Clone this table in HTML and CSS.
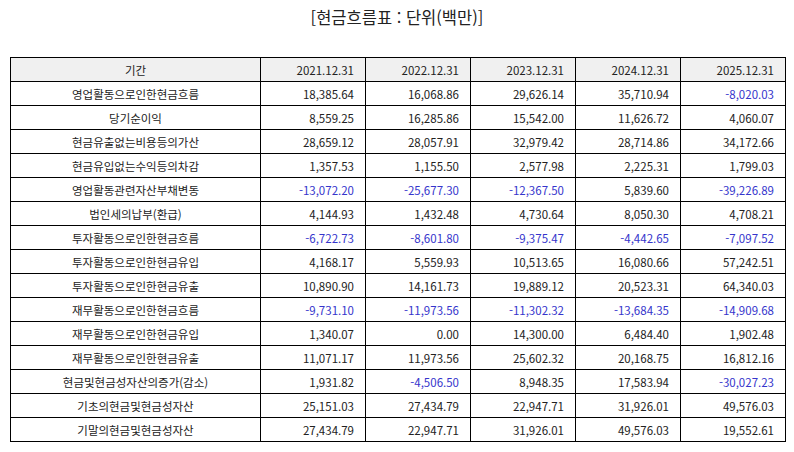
FILE: index.html
```html
<!DOCTYPE html>
<html lang="ko">
<head>
<meta charset="utf-8">
<link rel="stylesheet" href="styles.css">
</head>
<body>
<div class="page">
  <h1 class="title">[현금흐름표 : 단위(백만)]</h1>
  <table class="cf">
    <colgroup>
      <col class="c-label"><col class="c-num"><col class="c-num"><col class="c-num"><col class="c-num"><col class="c-num">
    </colgroup>
    <thead>
      <tr><th class="lbl">기간</th><th>2021.12.31</th><th>2022.12.31</th><th>2023.12.31</th><th>2024.12.31</th><th>2025.12.31</th></tr>
    </thead>
    <tbody>
      <tr><td class="lbl">영업활동으로인한현금흐름</td><td>18,385.64</td><td>16,068.86</td><td>29,626.14</td><td>35,710.94</td><td class="neg">-8,020.03</td></tr>
      <tr><td class="lbl">당기순이익</td><td>8,559.25</td><td>16,285.86</td><td>15,542.00</td><td>11,626.72</td><td>4,060.07</td></tr>
      <tr><td class="lbl">현금유출없는비용등의가산</td><td>28,659.12</td><td>28,057.91</td><td>32,979.42</td><td>28,714.86</td><td>34,172.66</td></tr>
      <tr><td class="lbl">현금유입없는수익등의차감</td><td>1,357.53</td><td>1,155.50</td><td>2,577.98</td><td>2,225.31</td><td>1,799.03</td></tr>
      <tr><td class="lbl">영업활동관련자산부채변동</td><td class="neg">-13,072.20</td><td class="neg">-25,677.30</td><td class="neg">-12,367.50</td><td>5,839.60</td><td class="neg">-39,226.89</td></tr>
      <tr><td class="lbl">법인세의납부(환급)</td><td>4,144.93</td><td>1,432.48</td><td>4,730.64</td><td>8,050.30</td><td>4,708.21</td></tr>
      <tr><td class="lbl">투자활동으로인한현금흐름</td><td class="neg">-6,722.73</td><td class="neg">-8,601.80</td><td class="neg">-9,375.47</td><td class="neg">-4,442.65</td><td class="neg">-7,097.52</td></tr>
      <tr><td class="lbl">투자활동으로인한현금유입</td><td>4,168.17</td><td>5,559.93</td><td>10,513.65</td><td>16,080.66</td><td>57,242.51</td></tr>
      <tr><td class="lbl">투자활동으로인한현금유출</td><td>10,890.90</td><td>14,161.73</td><td>19,889.12</td><td>20,523.31</td><td>64,340.03</td></tr>
      <tr><td class="lbl">재무활동으로인한현금흐름</td><td class="neg">-9,731.10</td><td class="neg">-11,973.56</td><td class="neg">-11,302.32</td><td class="neg">-13,684.35</td><td class="neg">-14,909.68</td></tr>
      <tr><td class="lbl">재무활동으로인한현금유입</td><td>1,340.07</td><td>0.00</td><td>14,300.00</td><td>6,484.40</td><td>1,902.48</td></tr>
      <tr><td class="lbl">재무활동으로인한현금유출</td><td>11,071.17</td><td>11,973.56</td><td>25,602.32</td><td>20,168.75</td><td>16,812.16</td></tr>
      <tr><td class="lbl">현금및현금성자산의증가(감소)</td><td>1,931.82</td><td class="neg">-4,506.50</td><td>8,948.35</td><td>17,583.94</td><td class="neg">-30,027.23</td></tr>
      <tr><td class="lbl">기초의현금및현금성자산</td><td>25,151.03</td><td>27,434.79</td><td>22,947.71</td><td>31,926.01</td><td>49,576.03</td></tr>
      <tr><td class="lbl">기말의현금및현금성자산</td><td>27,434.79</td><td>22,947.71</td><td>31,926.01</td><td>49,576.03</td><td>19,552.61</td></tr>
    </tbody>
  </table>
</div>
</body>
</html>
```

FILE: styles.css
```css
html, body {
  margin: 0;
  padding: 0;
  background: #ffffff;
}
.page {
  width: 794px;
  font-family: "Noto Sans CJK KR", "Noto Sans", sans-serif;
  color: #222222;
}
.title {
  margin: 0;
  height: 57px;
  padding-top: 6px;
  box-sizing: border-box;
  text-align: center;
  font-size: 16.5px;
  font-weight: 400;
  line-height: 22px;
  color: #222222;
}
.cf {
  margin-left: 10px;
  width: 776px;
  border-collapse: separate;
  border-spacing: 0;
  border-top: 1px solid #000000;
  border-left: 1px solid #000000;
  table-layout: fixed;
  font-size: 11.5px;
}
.c-label { width: 250px; }
.c-num { width: 105px; }
.cf th, .cf td {
  border-right: 1px solid #000000;
  border-bottom: 1px solid #000000;
  height: 24px;
  padding: 0 11px 0 4px;
  box-sizing: border-box;
  text-align: right;
  font-weight: 400;
  line-height: 14px;
  white-space: nowrap;
}
.cf thead th {
  background: #f0f0f0;
}
.cf .lbl {
  text-align: center;
  padding: 0 4px;
}
.cf .neg {
  color: #3535cc;
}
```
